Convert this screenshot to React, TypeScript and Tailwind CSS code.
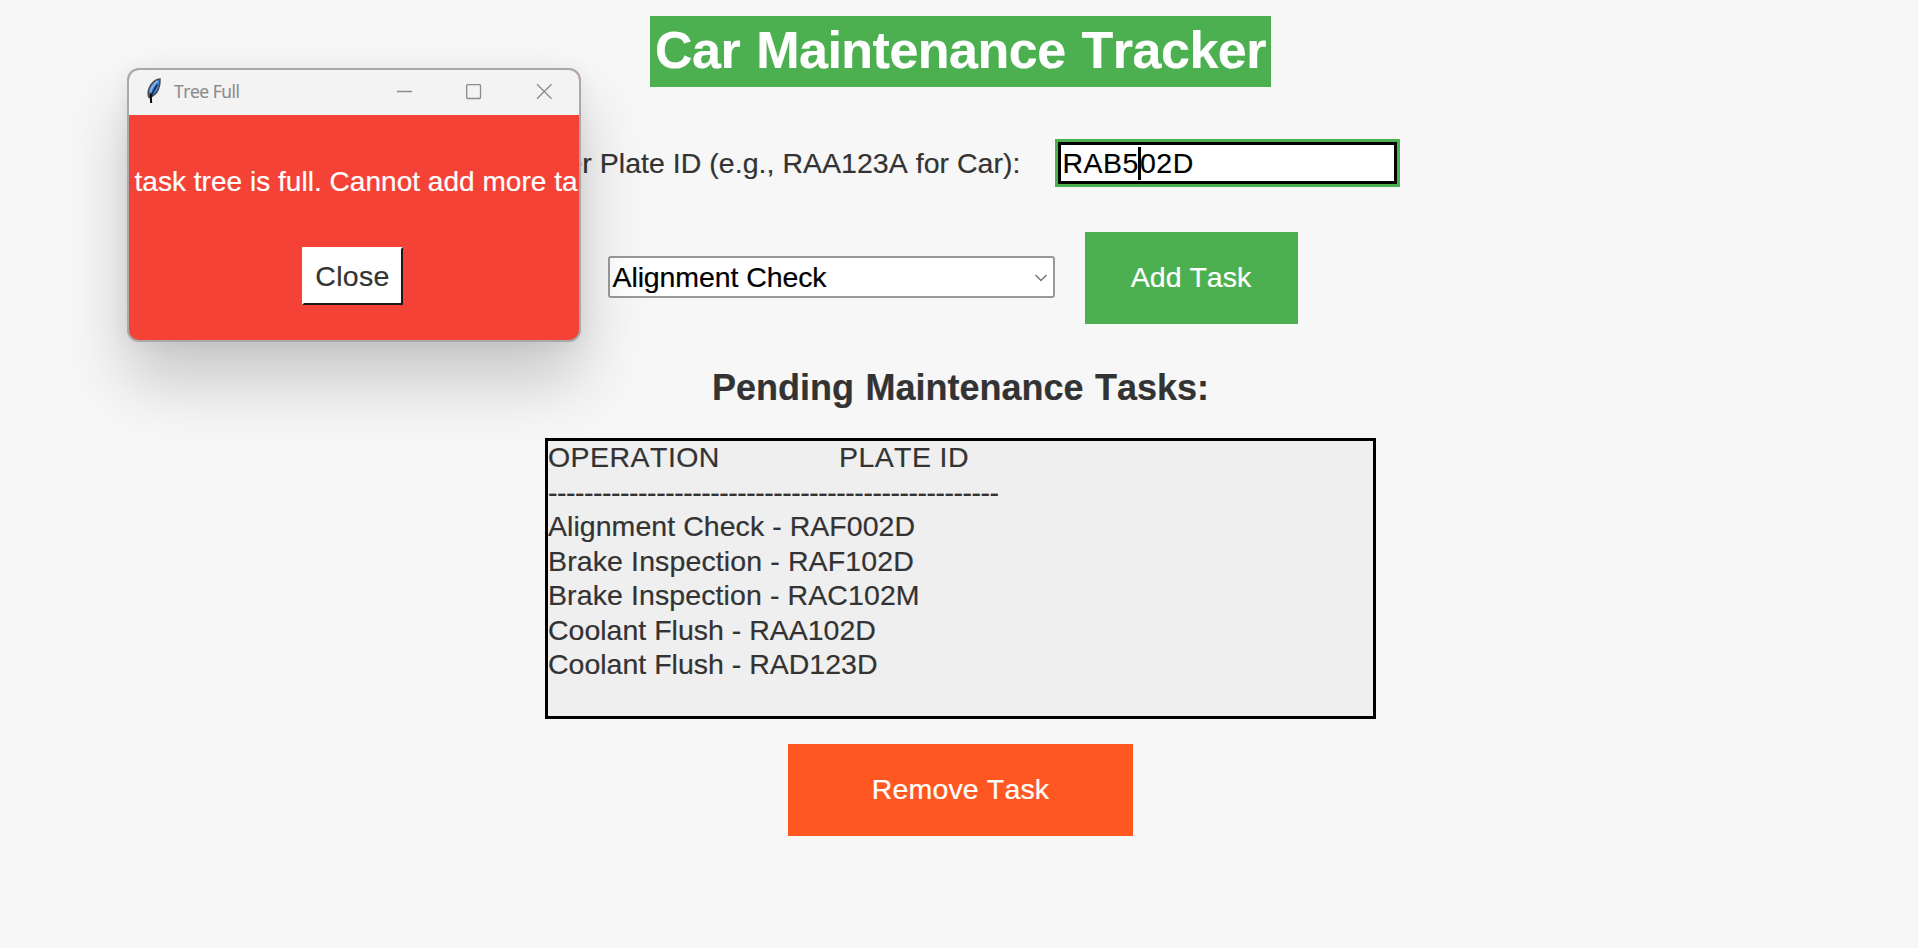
const tasks = [
  { text: 'Alignment Check - RAF002D', spacing: 'tracking-[0.05px]' },
  { text: 'Brake Inspection - RAF102D', spacing: 'tracking-[0.12px]' },
  { text: 'Brake Inspection - RAC102M', spacing: 'tracking-[0.1px]' },
  { text: 'Coolant Flush - RAA102D', spacing: 'tracking-normal' },
  { text: 'Coolant Flush - RAD123D', spacing: 'tracking-normal' },
];

function Feather() {
  return (
    <svg width="16" height="26" viewBox="0 0 16 26" fill="none" className="-mt-[3px] shrink-0">
      <path d="M14 1C10 1.400 5.500 5 3.200 10C1.800 13.800 1.800 17.200 3.200 19.600C6.200 18.600 9 17 10.800 14.200C13 10.600 14.200 5.500 14 1Z" fill="#3f86d6" stroke="#4a4a4a" strokeWidth="1.5" />
      <path d="M11.500 3C8 6 5.200 10 4.300 14" stroke="#7fb2ea" strokeWidth="1.8" />
      <path d="M11.300 6.500C9.500 10 6 14.500 5.300 19" stroke="#10233c" strokeWidth="1.5" />
      <path d="M4.600 15.500L5.200 25" stroke="#0b0b0b" strokeWidth="2" />
    </svg>
  );
}

function TreeFullDialog() {
  return (
    <div className="absolute left-[127px] top-[68px] flex h-[274px] w-[454px] flex-col overflow-hidden rounded-[12px] border-2 border-[#a9a9a9] bg-[#f44336] shadow-[0_38px_66px_rgba(0,0,0,0.2),0_2px_20px_rgba(0,0,0,0.06)]">
      <div className="flex h-[45px] shrink-0 items-center bg-[#f3f3f3] pl-[17px]">
        <Feather />
        <span className="-mt-[2px] ml-[12px] w-[222px] font-['Open_Sans',sans-serif] text-[17.5px] tracking-[-0.45px] text-[#8b8b8b]">
          Tree Full
        </span>
        <svg width="160" height="20" viewBox="0 0 160 20" fill="none" stroke="#8a8a8a" strokeWidth="1.3" className="-mt-[2px]">
          <path d="M1 9.500H16" />
          <rect x="70.700" y="2.700" width="13.800" height="13.800" rx="1" />
          <path d="M141 2.200L155.500 16.700M155.500 2.200L141 16.700" />
        </svg>
      </div>
      <div className="flex flex-col items-center">
        <p className="mt-[50px] self-start whitespace-nowrap pl-[5.500px] text-[28px] leading-[34px] tracking-[0.03px] text-white">
          task tree is full. Cannot add more ta
        </p>
        <button className="mr-[3px] mt-[48px] flex h-[58px] w-[101px] items-center justify-center border-2 border-b-[#1a1a1a] border-l-white border-r-[#1a1a1a] border-t-white bg-white tracking-[0.3px] text-[#333]">
          Close
        </button>
      </div>
    </div>
  );
}

export default function App() {
  return (
    <div className="relative flex h-[948px] w-full flex-col items-center overflow-hidden bg-[#f7f7f7] pl-[3px] font-['Liberation_Sans',Arial,sans-serif] text-[28.5px] text-[#333] [-webkit-text-stroke:0.2px] [font-kerning:none]">
      <h1 className="mt-[16px] flex h-[71px] w-[621px] shrink-0 items-center justify-center whitespace-nowrap bg-[#4caf50] pb-[3px] text-[52px] font-bold tracking-[-0.5px] text-white [word-spacing:2px]">
        Car Maintenance Tracker
      </h1>

      <div className="mt-[52px] flex h-[48px] w-[880px] items-center justify-end whitespace-nowrap">
        <label className="tracking-[0.03px]">Enter Plate ID (e.g., RAA123A for Car):</label>
        <div className="ml-[34px] mr-px h-[48px] w-[345px] bg-[#4caf50] p-[3px]">
          <div className="flex h-full items-center border-[3px] border-black bg-white pl-[2px] tracking-[0.5px] text-black">
            <span>RAB5</span>
            <span className="-mx-px h-[33px] w-[3px] bg-black" />
            <span>02D</span>
          </div>
        </div>
      </div>

      <div className="mr-[16px] mt-[45px] flex h-[92px] w-[690px] items-center">
        <div className="mb-[2px] flex h-[42px] w-[447px] items-center justify-between rounded-[3px] border-2 border-[#999] bg-white pl-[3px] pr-[5px] tracking-[-0.1px] text-black">
          <span>Alignment Check</span>
          <svg width="14" height="10" viewBox="0 0 14 10" fill="none" stroke="#777" strokeWidth="1.5" className="mt-[2px]">
            <path d="M1.500 2L7 7.500L12.500 2" />
          </svg>
        </div>
        <button className="ml-[30px] h-[92px] w-[213px] bg-[#4caf50] pb-[2px] text-white">Add Task</button>
      </div>

      <h2 className="mt-[44px] whitespace-nowrap text-[36px] font-bold leading-[40px] tracking-[0px] [word-spacing:1.500px]">
        Pending Maintenance Tasks:
      </h2>

      <div className="mr-px mt-[30px] h-[281px] w-[831px] shrink-0 whitespace-nowrap border-[3px] border-black bg-[#efefef] pl-[0.500px] leading-[34.500px]">
        <div className="-mt-px flex">
          <span className="w-[291px] tracking-[0.45px]">OPERATION</span>
          <span className="tracking-[0.4px]">PLATE ID</span>
        </div>
        <div className="tracking-[-0.480px]">--------------------------------------------------</div>
        {tasks.map((task) => (
          <div key={task.text} className={task.spacing}>{task.text}</div>
        ))}
      </div>

      <button className="mt-[25px] h-[92px] w-[345px] shrink-0 bg-[#ff5722] pb-[2px] tracking-[0.15px] text-white">Remove Task</button>

      <TreeFullDialog />
    </div>
  );
}
